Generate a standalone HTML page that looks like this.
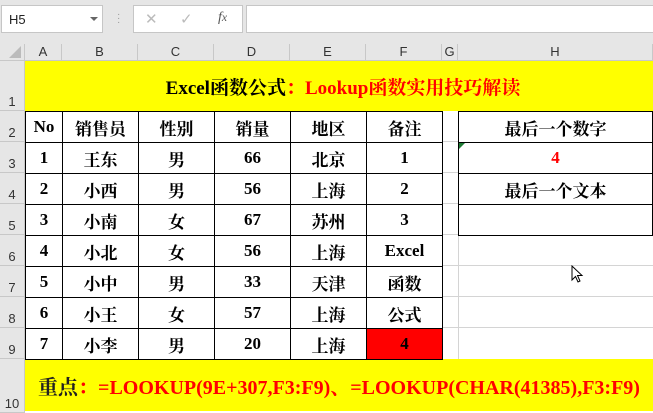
<!DOCTYPE html>
<html><head><meta charset="utf-8"><style>
*{margin:0;padding:0;box-sizing:border-box}
body{width:653px;height:413px;overflow:hidden;background:#fff;position:relative;font-family:"Liberation Serif","Noto Serif CJK SC",serif}
.top{position:absolute;left:0;top:0;width:653px;height:44px;background:#e6e6e6}
.box{position:absolute;background:#fff;border:1px solid #c6c6c6}
.hdr{position:absolute;background:#e6e6e6;font-family:"Liberation Sans",sans-serif;font-size:13px;color:#333;text-align:center;border-right:1px solid #c8c8c8;border-bottom:1px solid #c8c8c8}
.rh{position:absolute;left:0;width:25px;background:#e6e6e6;font-family:"Liberation Sans",sans-serif;font-size:13px;color:#333;text-align:center;border-bottom:1px solid #c8c8c8;border-right:1px solid #c8c8c8;display:flex;align-items:flex-end;justify-content:center;padding-bottom:1px}
.g{position:absolute;background:#d4d4d4}
td{border:1px solid #000;height:31px;padding:0}
</style></head><body>
<div class="top"></div>
<div class="box" style="left:1px;top:5px;width:102px;height:28px;font-family:'Liberation Sans',sans-serif;font-size:13px;padding:6px 0 0 7px;color:#222">H5<span style="position:absolute;left:88px;top:11px;border-left:4px solid transparent;border-right:4px solid transparent;border-top:4px solid #666"></span></div>
<div style="position:absolute;left:117px;top:13px;color:#999;font-size:10px;line-height:4px;font-family:'Liberation Sans'">·<br>·<br>·</div>
<div class="box" style="left:133px;top:5px;width:110px;height:28px;font-family:'Liberation Sans',sans-serif;color:#bbb;font-size:15px"><span style="position:absolute;left:11px;top:4px">✕</span><span style="position:absolute;left:46px;top:4px">✓</span><span style="position:absolute;left:84px;top:4px;color:#555;font-style:italic;font-family:'Liberation Serif';font-size:14px">f<small>x</small></span></div>
<div class="box" style="left:246px;top:5px;width:410px;height:28px"></div>
<div class="hdr" style="left:0;top:44px;width:25px;height:17px"><span style="position:absolute;right:3px;bottom:2px;border-left:12px solid transparent;border-bottom:12px solid #bbb"></span></div>
<div class="hdr" style="left:25px;top:44px;width:37px;height:17px">A</div>
<div class="hdr" style="left:62px;top:44px;width:76px;height:17px">B</div>
<div class="hdr" style="left:138px;top:44px;width:76px;height:17px">C</div>
<div class="hdr" style="left:214px;top:44px;width:76px;height:17px">D</div>
<div class="hdr" style="left:290px;top:44px;width:76px;height:17px">E</div>
<div class="hdr" style="left:366px;top:44px;width:76px;height:17px">F</div>
<div class="hdr" style="left:442px;top:44px;width:16px;height:17px">G</div>
<div class="hdr" style="left:458px;top:44px;width:195px;height:17px">H</div>
<div class="rh" style="top:61px;height:50px">1</div>
<div class="rh" style="top:111px;height:31px">2</div>
<div class="rh" style="top:142px;height:31px">3</div>
<div class="rh" style="top:173px;height:31px">4</div>
<div class="rh" style="top:204px;height:31px">5</div>
<div class="rh" style="top:235px;height:31px">6</div>
<div class="rh" style="top:266px;height:31px">7</div>
<div class="rh" style="top:297px;height:31px">8</div>
<div class="rh" style="top:328px;height:31px">9</div>
<div class="rh" style="top:359px;height:54px">10</div>
<div style="position:absolute;left:25px;top:61px;width:628px;height:50px;background:#ff0;display:flex;align-items:center;justify-content:center;font-weight:bold;font-size:19px;padding-left:8px">Excel函数公式<span style="color:#f00">：Lookup函数实用技巧解读</span></div>
<div style="position:absolute;left:25px;top:359px;width:628px;height:52px;background:#ff0;display:flex;align-items:center;justify-content:center;font-weight:bold;font-size:20px;color:#f00"><span style="color:#222">重点</span>：=LOOKUP(9E+307,F3:F9)、=LOOKUP(CHAR(41385),F3:F9)</div>
<div class="g" style="left:458px;top:235px;width:1px;height:124px"></div>
<div class="g" style="left:458px;top:265px;width:195px;height:1px"></div>
<div class="g" style="left:458px;top:296px;width:195px;height:1px"></div>
<div class="g" style="left:458px;top:327px;width:195px;height:1px"></div>
<div class="g" style="left:442px;top:141px;width:16px;height:1px"></div>
<div class="g" style="left:442px;top:172px;width:16px;height:1px"></div>
<div class="g" style="left:442px;top:203px;width:16px;height:1px"></div>
<div class="g" style="left:442px;top:234px;width:16px;height:1px"></div>
<div class="g" style="left:442px;top:265px;width:16px;height:1px"></div>
<div class="g" style="left:442px;top:296px;width:16px;height:1px"></div>
<div class="g" style="left:442px;top:327px;width:16px;height:1px"></div>
<table style="position:absolute;left:25px;top:111px;border-collapse:collapse;table-layout:fixed;font-weight:bold;font-size:17px;text-align:center">
<colgroup><col style="width:37px"><col style="width:76px"><col style="width:76px"><col style="width:76px"><col style="width:76px"><col style="width:76px"></colgroup>
<tr><td>No</td><td>销售员</td><td>性别</td><td>销量</td><td>地区</td><td>备注</td></tr>
<tr><td>1</td><td>王东</td><td>男</td><td>66</td><td>北京</td><td>1</td></tr>
<tr><td>2</td><td>小西</td><td>男</td><td>56</td><td>上海</td><td>2</td></tr>
<tr><td>3</td><td>小南</td><td>女</td><td>67</td><td>苏州</td><td>3</td></tr>
<tr><td>4</td><td>小北</td><td>女</td><td>56</td><td>上海</td><td>Excel</td></tr>
<tr><td>5</td><td>小中</td><td>男</td><td>33</td><td>天津</td><td>函数</td></tr>
<tr><td>6</td><td>小王</td><td>女</td><td>57</td><td>上海</td><td>公式</td></tr>
<tr><td>7</td><td>小李</td><td>男</td><td>20</td><td>上海</td><td style="background:#f00">4</td></tr>
</table>
<table style="position:absolute;left:458px;top:111px;border-collapse:collapse;table-layout:fixed;font-weight:bold;font-size:17px;text-align:center">
<colgroup><col style="width:195px"></colgroup>
<tr><td>最后一个数字</td></tr>
<tr><td style="color:#f00;position:relative">4<span style="position:absolute;left:0;top:0;border-right:6px solid transparent;border-top:6px solid #1e7b34"></span></td></tr>
<tr><td>最后一个文本</td></tr>
<tr><td></td></tr>
</table>
<svg style="position:absolute;left:571px;top:265px" width="14" height="20" viewBox="0 0 14 20"><path d="M1 1 L1 15 L4.5 11.5 L7 17 L9 16 L6.5 10.5 L11 10.5 Z" fill="#fff" stroke="#000" stroke-width="1"/></svg>
</body></html>
